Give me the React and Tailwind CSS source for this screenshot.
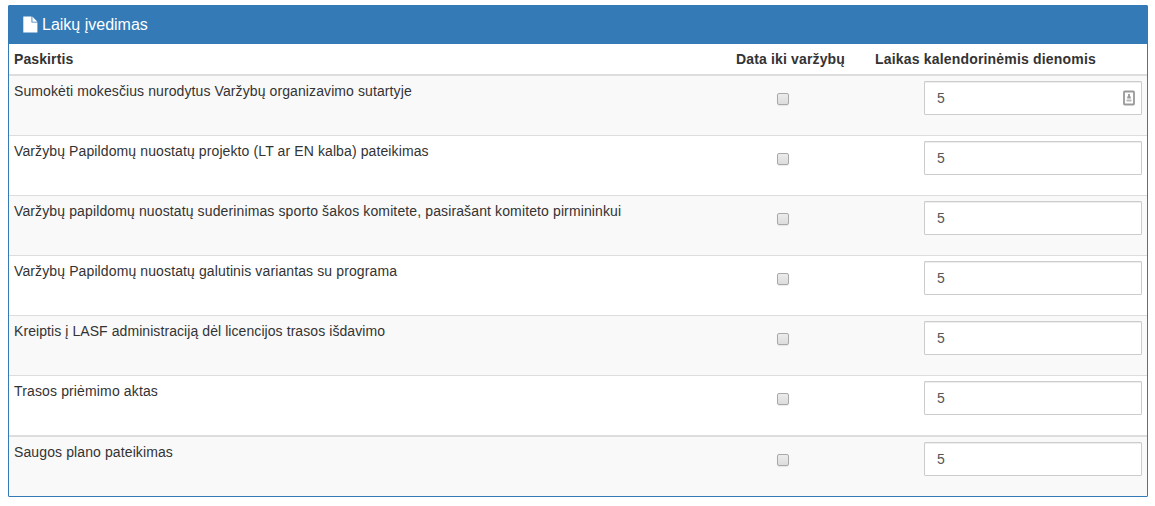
import React from "react";

const rows = [
  { label: "Sumokėti mokesčius nurodytus Varžybų organizavimo sutartyje", tracking: "tracking-[0.1px]", autofill: true },
  { label: "Varžybų Papildomų nuostatų projekto (LT ar EN kalba) pateikimas", tracking: "tracking-[0.11px]" },
  { label: "Varžybų papildomų nuostatų suderinimas sporto šakos komitete, pasirašant komiteto pirmininkui", tracking: "tracking-[0.123px]" },
  { label: "Varžybų Papildomų nuostatų galutinis variantas su programa", tracking: "tracking-[0.115px]" },
  { label: "Kreiptis į LASF administraciją dėl licencijos trasos išdavimo", tracking: "tracking-[0.075px]" },
  { label: "Trasos priėmimo aktas", tracking: "tracking-[0.14px]" },
  { label: "Saugos plano pateikimas", tracking: "tracking-[0.11px]" },
];

function FileIcon() {
  return (
    <svg width="15" height="17" viewBox="0 0 15 17" fill="#fff" className="mb-[2px] shrink-0">
      <path d="M0.3 0.6H8.5V6.6H14.4V16.6H0.3Z" />
      <path d="M9.4 0.6L14.4 5.7H9.4Z" />
    </svg>
  );
}

function AutofillIcon() {
  return (
    <svg width="12" height="16" viewBox="0 0 12 16" fill="none" className="shrink-0">
      <rect x="1" y="1.5" width="10" height="13" rx="0.8" stroke="#999" strokeWidth="1.8" />
      <path d="M6 4V8M4.2 7.5H7.8" stroke="#999" strokeWidth="1.8" />
      <path d="M3.5 10.5H8.5" stroke="#b8b8b8" strokeWidth="2" />
    </svg>
  );
}

function Checkbox() {
  return (
    <input
      type="checkbox"
      className="mt-[17px] ml-[3px] size-3 shrink-0 appearance-none rounded-[2px] border border-[#a9a9a9] bg-linear-to-b from-[#ececec] to-[#dcdcdc] shadow-[0_1px_1px_rgba(0,0,0,0.08)]"
    />
  );
}

function Row({ label, tracking, autofill, index }) {
  const last = index === rows.length - 1;
  const border = index === 0 ? "" : last ? "border-t-2" : "border-t";
  const height = index === 0 ? "h-[59px]" : last ? "h-[61px]" : "h-[60px]";
  const shade = index % 2 === 0 ? "bg-[#f9f9f9]" : "bg-white";
  return (
    <div className={`flex items-start border-[#ddd] px-[5px] ${border} ${height} ${shade}`}>
      <div className={`w-[760px] pt-[5px] leading-5 whitespace-nowrap ${tracking}`}>{label}</div>
      <Checkbox />
      <div className="relative mt-[5px] ml-auto w-[218px]">
        <input
          type="text"
          defaultValue="5"
          className="block h-[34px] w-full rounded-[1px] border border-[#ccc] bg-white px-3 text-sm text-[#555] shadow-[inset_0_1px_1px_rgba(0,0,0,0.075)] outline-none"
        />
        {autofill && (
          <span className="absolute top-[9px] right-[7px]">
            <AutofillIcon />
          </span>
        )}
      </div>
    </div>
  );
}

export default function App() {
  return (
    <div className="px-[8px] pt-[5px] font-['Liberation_Sans',Arial,sans-serif] text-sm text-[#333]">
      <div className="w-[1140px] overflow-hidden rounded-[1px] border border-[#337ab7] bg-white">
        <div className="flex h-[38px] items-center bg-[#337ab7] pl-[14px] text-base text-white">
          <FileIcon />
          <span className="ml-1 whitespace-nowrap">Laikų įvedimas</span>
        </div>
        <div className="flex h-8 items-start border-b-2 border-[#ddd] pt-[5px] pl-[5px] leading-5 font-bold whitespace-nowrap">
          <div className="w-[722px] tracking-[0.1px]">Paskirtis</div>
          <div className="w-[139px] tracking-[0.15px]">Data iki varžybų</div>
          <div className="tracking-[0.18px]">Laikas kalendorinėmis dienomis</div>
        </div>
        {rows.map((row, i) => (
          <Row key={row.label} index={i} {...row} />
        ))}
      </div>
    </div>
  );
}
